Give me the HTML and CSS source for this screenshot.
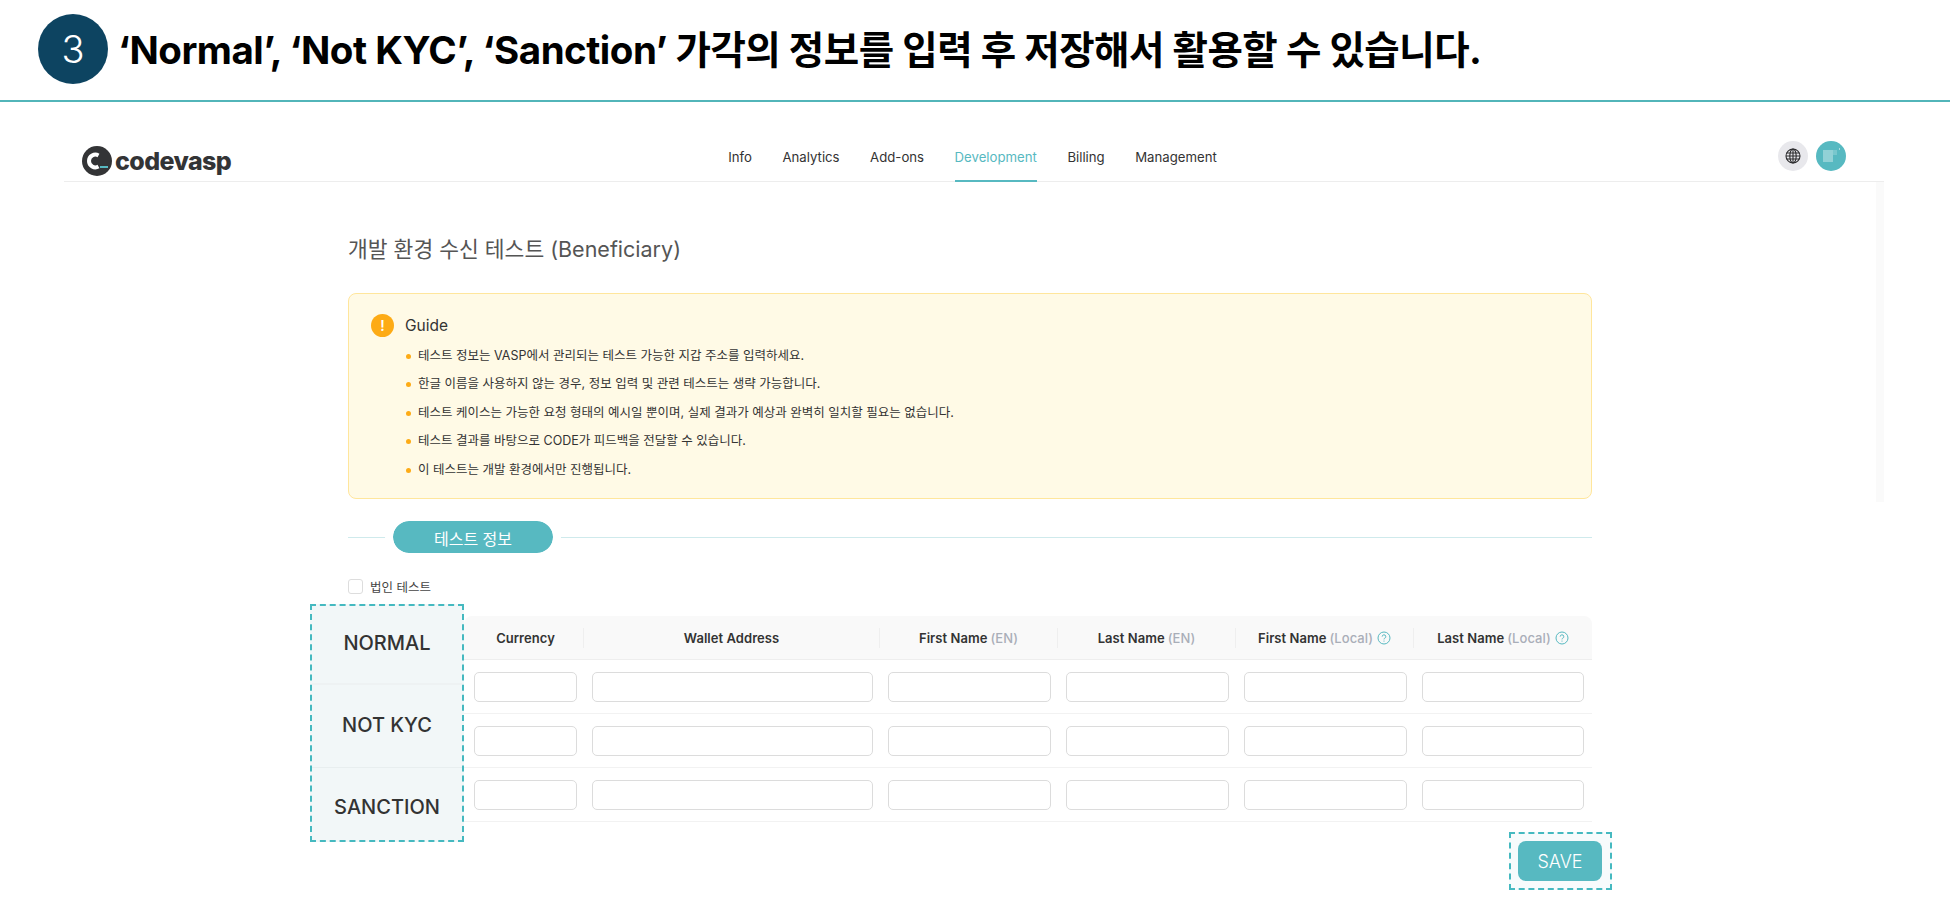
FILE: index.html
```html
<!DOCTYPE html>
<html lang="ko">

<head>
    <meta charset="UTF-8">
    <title>Beneficiary Test Guide</title>
    <link rel="stylesheet" href="styles.css">
</head>

<body>
    <header class="step-head">
        <div class="step-num">3</div>
        <h1 class="step-title">‘Normal’, ‘Not KYC’, ‘Sanction’ 가각의 정보를 입력 후 저장해서 활용할 수 있습니다.</h1>
    </header>

    <div class="panel">
        <div class="topbar">
            <div class="logo">
                <svg class="logo-mark" viewBox="0 0 30 30" width="30" height="30">
                    <circle cx="15" cy="15" r="15" fill="#333436"></circle>
                    <path d="M16.5 9.4 A6.4 6.4 0 1 0 16.5 20.6" fill="none" stroke="#fff" stroke-width="4"></path>
                    <rect x="18" y="20" width="8" height="2" fill="#57b9c1"></rect>
                </svg>
                <span class="logo-text">codevasp</span>
            </div>
            <nav class="nav">
                <a>Info</a>
                <a>Analytics</a>
                <a>Add-ons</a>
                <a class="active">Development</a>
                <a>Billing</a>
                <a>Management</a>
            </nav>
            <div class="top-icons">
                <div class="globe">
                    <svg viewBox="0 0 16 16" width="16" height="16" fill="none" stroke="#2c2c2e" stroke-width="1.1">
                        <circle cx="8" cy="8" r="7"></circle>
                        <ellipse cx="8" cy="8" rx="3.2" ry="7"></ellipse>
                        <path d="M8 1V15M1.6 5H14.4M1 8H15M1.6 11H14.4"></path>
                    </svg>
                </div>
                <div class="avatar">
                    <svg viewBox="0 0 30 30" width="30" height="30">
                        <rect x="7" y="9" width="10" height="12" fill="#fff" opacity=".35"></rect>
                        <rect x="17" y="9" width="4" height="5" fill="#fff" opacity=".2"></rect>
                        <rect x="23" y="7" width="1" height="2" fill="#fff" opacity=".5"></rect>
                    </svg>
                </div>
            </div>
        </div>

        <div class="scroll-strip"></div>

        <main class="content">
            <h2 class="page-title">개발 환경 수신 테스트 (Beneficiary)</h2>

            <section class="guide">
                <div class="guide-head">
                    <span class="guide-icon">!</span>
                    <span>Guide</span>
                </div>
                <ul class="guide-list">
                    <li>테스트 정보는 VASP에서 관리되는 테스트 가능한 지갑 주소를 입력하세요.</li>
                    <li>한글 이름을 사용하지 않는 경우, 정보 입력 및 관련 테스트는 생략 가능합니다.</li>
                    <li>테스트 케이스는 가능한 요청 형태의 예시일 뿐이며, 실제 결과가 예상과 완벽히 일치할 필요는 없습니다.</li>
                    <li>테스트 결과를 바탕으로 CODE가 피드백을 전달할 수 있습니다.</li>
                    <li>이 테스트는 개발 환경에서만 진행됩니다.</li>
                </ul>
            </section>

            <div class="section-label">
                <span class="pill">테스트 정보</span>
            </div>

            <label class="check-row">
                <span class="check-box"></span>
                법인 테스트
            </label>

            <div class="test-area">
                <div class="row-names">
                    <div class="row-name normal">NORMAL</div>
                    <div class="row-name not-kyc">NOT KYC</div>
                    <div class="row-name sanction">SANCTION</div>
                </div>

                <div class="table-col">
                    <div class="test-table">
                        <div class="thead">
                            <div class="th">Currency</div>
                            <div class="th">Wallet Address</div>
                            <div class="th">First Name<em>(EN)</em></div>
                            <div class="th">Last Name<em>(EN)</em></div>
                            <div class="th">First Name<em>(Local)</em>
                                <svg class="help" viewBox="0 0 14 14" width="14" height="14" fill="none" stroke="#57b9c1">
                                    <circle cx="7" cy="7" r="6"></circle>
                                    <path d="M5.2 5.6A1.8 1.8 0 1 1 7.6 7.3C7.1 7.5 7 7.8 7 8.4"></path>
                                    <path d="M7 9.6V10.6"></path>
                                </svg>
                            </div>
                            <div class="th">Last Name<em>(Local)</em>
                                <svg class="help" viewBox="0 0 14 14" width="14" height="14" fill="none" stroke="#57b9c1">
                                    <circle cx="7" cy="7" r="6"></circle>
                                    <path d="M5.2 5.6A1.8 1.8 0 1 1 7.6 7.3C7.1 7.5 7 7.8 7 8.4"></path>
                                    <path d="M7 9.6V10.6"></path>
                                </svg>
                            </div>
                        </div>
                        <div class="tr">
                            <div class="td"><input type="text"></div>
                            <div class="td"><input type="text"></div>
                            <div class="td"><input type="text"></div>
                            <div class="td"><input type="text"></div>
                            <div class="td"><input type="text"></div>
                            <div class="td"><input type="text"></div>
                        </div>
                        <div class="tr">
                            <div class="td"><input type="text"></div>
                            <div class="td"><input type="text"></div>
                            <div class="td"><input type="text"></div>
                            <div class="td"><input type="text"></div>
                            <div class="td"><input type="text"></div>
                            <div class="td"><input type="text"></div>
                        </div>
                        <div class="tr">
                            <div class="td"><input type="text"></div>
                            <div class="td"><input type="text"></div>
                            <div class="td"><input type="text"></div>
                            <div class="td"><input type="text"></div>
                            <div class="td"><input type="text"></div>
                            <div class="td"><input type="text"></div>
                        </div>
                    </div>
                    <div class="save-wrap">
                        <button class="save-btn">SAVE</button>
                    </div>
                </div>
            </div>
        </main>
    </div>
</body>

</html>
```

FILE: styles.css
```css
* {
    margin: 0;
    padding: 0;
    box-sizing: border-box;
}

body {
    font-family: Inter, 'Noto Sans CJK KR', sans-serif;
    background: #fff;
    color: #333;
    height: 912px;
    overflow: hidden;
}

.step-head {
    display: flex;
    align-items: center;
    height: 102px;
    padding: 0 0 3px 38px;
    border-bottom: 2px solid #52b5b9;
}

.step-num {
    width: 70px;
    height: 70px;
    border-radius: 50%;
    background: #0d4461;
    color: #fff;
    font-size: 38px;
    font-weight: 300;
    display: flex;
    align-items: center;
    justify-content: center;
    flex-shrink: 0;
}

.step-title {
    margin: 0 0 4px 10px;
    font-size: 38.5px;
    font-weight: 700;
    color: #000;
    letter-spacing: -0.5px;
    white-space: nowrap;
}

.panel {
    position: relative;
    margin: 0 66px 0 64px;
}

.topbar {
    position: relative;
    display: flex;
    align-items: center;
    justify-content: center;
    height: 54px;
    margin-top: 26px;
    border-bottom: 1px solid #ededed;
}

.logo {
    position: absolute;
    left: 18px;
    top: 18px;
    display: flex;
    align-items: center;
    gap: 3px;
}

.logo-text {
    font-size: 25px;
    font-weight: 800;
    color: #333436;
    line-height: 30px;
    letter-spacing: -0.6px;
}

.nav {
    display: flex;
    gap: 30.5px;
    height: 54px;
    margin-left: -3px;
}

.nav a {
    display: flex;
    align-items: center;
    height: 54px;
    padding-top: 7px;
    font-size: 13.2px;
    color: #333;
    border-bottom: 2px solid transparent;
}

.nav a.active {
    color: #57b9c1;
    border-bottom-color: #57b9c1;
}

.top-icons {
    position: absolute;
    right: 38px;
    top: 13px;
    display: flex;
    gap: 8px;
}

.globe,
.avatar {
    width: 30px;
    height: 30px;
    border-radius: 50%;
    display: flex;
    align-items: center;
    justify-content: center;
}

.globe {
    background: #e8e8ec;
}

.avatar {
    background: #57b9c1;
}

.scroll-strip {
    position: absolute;
    right: 0;
    top: 54px;
    width: 8px;
    height: 320px;
    background: #fafafa;
}

.content {
    margin: 0 292px 0 284px;
}

.page-title {
    margin-top: 52px;
    font-size: 21.5px;
    line-height: 30px;
    font-weight: 400;
    color: #555;
}

.guide {
    margin-top: 29px;
    height: 206px;
    padding: 19px 18px 0 22px;
    background: #fffae6;
    border: 1px solid #ffe69c;
    border-radius: 8px;
}

.guide-head {
    display: flex;
    align-items: center;
    gap: 11px;
    height: 24px;
    font-size: 15.5px;
    color: #333;
}

.guide-icon {
    width: 23px;
    height: 23px;
    border-radius: 50%;
    background: #fdab16;
    color: #fff;
    font-size: 14px;
    font-weight: 600;
    text-align: center;
    line-height: 23px;
}

.guide-list {
    list-style: none;
    margin-top: 4.5px;
    padding-left: 36px;
}

.guide-list li {
    position: relative;
    height: 28.5px;
    padding-left: 11px;
    font-size: 12.5px;
    line-height: 28.5px;
    color: #333;
}

.guide-list li::before {
    content: '';
    position: absolute;
    left: -1px;
    top: 12px;
    width: 5px;
    height: 5px;
    border-radius: 50%;
    background: #fdab16;
}

.section-label {
    position: relative;
    display: flex;
    align-items: center;
    height: 32px;
    margin-top: 22px;
    padding-left: 45px;
}

.section-label::before {
    content: '';
    position: absolute;
    left: 0;
    right: 0;
    top: 16px;
    height: 1px;
    background: #cfeaec;
}

.pill {
    position: relative;
    width: 160px;
    height: 32px;
    border-radius: 16px;
    background: #57b9c1;
    outline: 8px solid #fff;
    color: #fff;
    font-size: 16px;
    line-height: 36px;
    text-align: center;
}

.check-row {
    display: flex;
    align-items: center;
    gap: 7px;
    height: 16px;
    margin-top: 25px;
    font-size: 12.5px;
    color: #444;
}

.check-box {
    width: 15px;
    height: 15px;
    border: 1px solid #ddd;
    border-radius: 3px;
    background: #fff;
}

.test-area {
    display: flex;
    align-items: flex-start;
    margin: 10px 0 0 -38px;
}

.row-names {
    width: 154px;
    height: 238px;
    flex-shrink: 0;
    display: flex;
    flex-direction: column;
    background: #f2f7f8;
    border: 2px dashed #45b9c0;
}

.row-name {
    display: flex;
    align-items: center;
    justify-content: center;
    font-size: 20px;
    font-weight: 500;
    color: #333;
}

.normal {
    height: 79px;
    padding-bottom: 3px;
    border-bottom: 2px solid #eef2f3;
}

.not-kyc {
    height: 83px;
    padding-bottom: 2px;
    border-bottom: 1px solid #e8eeef;
}

.sanction {
    flex: 1;
    padding-top: 5px;
}

.table-col {
    flex: 1;
    display: flex;
    flex-direction: column;
    padding-top: 12px;
}

.thead,
.tr {
    display: grid;
    grid-template-columns: 120px 296px repeat(4, 178px);
}

.thead {
    height: 44px;
    background: #f9f9f9;
    border-bottom: 1px solid #eee;
    border-radius: 8px 8px 0 0;
    align-items: center;
}

.th {
    display: flex;
    align-items: center;
    justify-content: center;
    height: 20px;
    font-size: 13px;
    font-weight: 600;
    color: #333;
    letter-spacing: 0.05px;
    border-right: 1px solid #efefef;
}

.th:first-child {
    padding-left: 4px;
}

.th:last-child {
    border-right: none;
}

.th em {
    margin-left: 3px;
    font-style: normal;
    font-weight: 500;
    color: #a9aeb8;
}

.help {
    margin-left: 4px;
}

.tr {
    height: 54px;
    align-items: center;
    border-bottom: 1px solid #f2f2f2;
}

.td {
    padding: 0 7px 0 8px;
}

.td:first-child {
    padding-left: 10px;
}

.td:last-child {
    padding-right: 8px;
}

.td input {
    display: block;
    width: 100%;
    height: 30px;
    border: 1px solid #dcdcdc;
    border-radius: 5px;
    background: #fff;
}

.save-wrap {
    align-self: flex-end;
    margin: 10px -20px 0 0;
    padding: 7px 8px 7px 7px;
    background: #f7fbfc;
    border: 2px dashed #45b9c0;
}

.save-btn {
    display: block;
    width: 84px;
    height: 40px;
    border: none;
    border-radius: 8px;
    background: #57b9c1;
    color: #fff;
    font-family: Inter, sans-serif;
    font-size: 18px;
    font-weight: 300;
}
```
